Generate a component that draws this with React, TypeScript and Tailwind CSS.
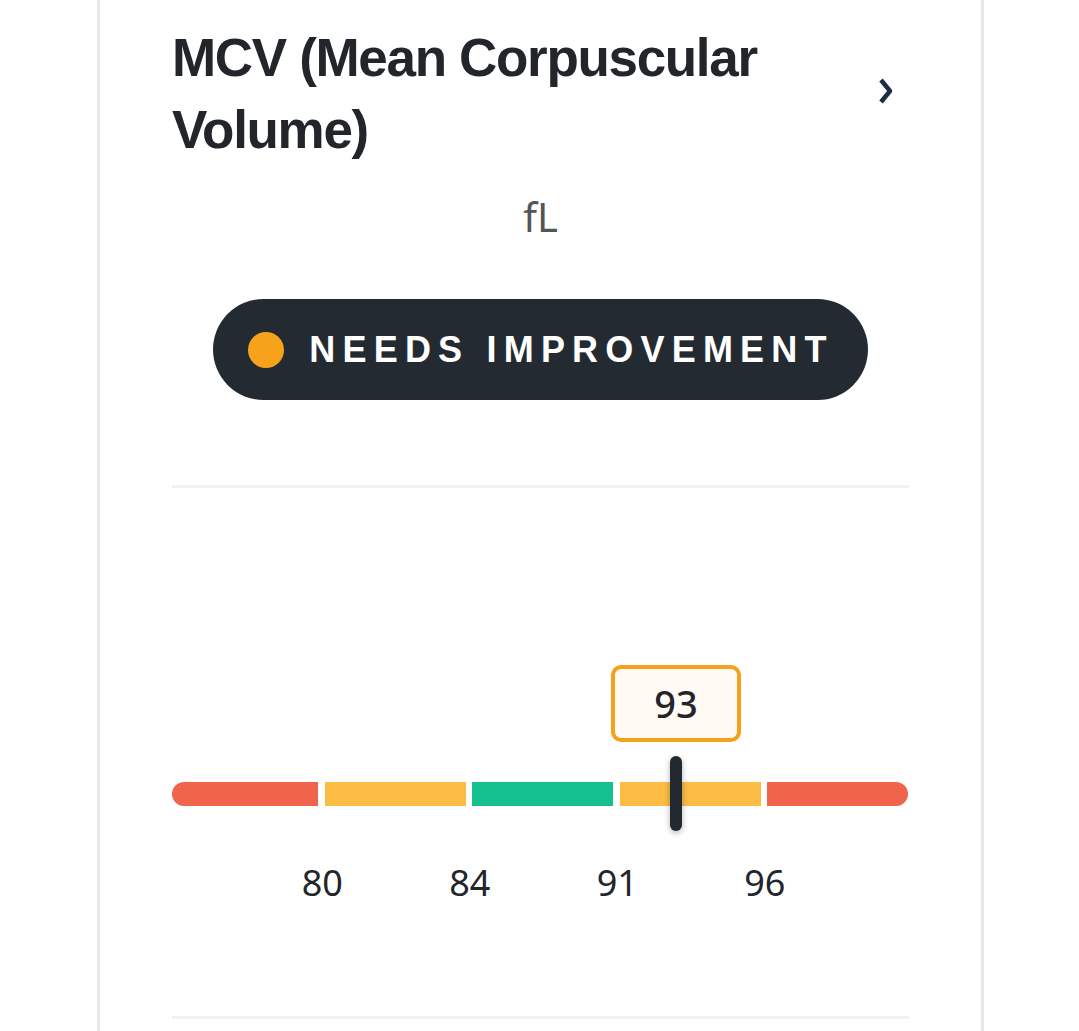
import React from 'react';

const segments = [
  { color: '#f1644c', from: 0, to: 80, width: 146 },
  { color: '#fdbd45', from: 80, to: 84, width: 141 },
  { color: '#13c08e', from: 84, to: 91, width: 141 },
  { color: '#fdbd45', from: 91, to: 96, width: 141 },
  { color: '#f1644c', from: 96, to: 120, width: 141 },
];

const value = 93;
const gap = 6.5;

function markerLeft() {
  let x = 0;
  for (const s of segments) {
    if (value >= s.from && value < s.to) {
      return x + ((value - s.from) / (s.to - s.from)) * s.width;
    }
    x += s.width + gap;
  }
  return x;
}

function boundaries() {
  const out: { x: number; label: number }[] = [];
  let x = 0;
  segments.slice(0, 4).forEach((s) => {
    x += s.width;
    out.push({ x: x + gap / 2, label: s.to });
    x += gap;
  });
  return out;
}

export default function App() {
  const left = markerLeft();

  return (
    <div className="min-h-screen bg-white" style={{ fontFamily: '"Liberation Sans", Arial, sans-serif' }}>
      <div className="ml-[97px] w-[887px] border-x-[3px] border-[#e7e7e7] px-[72px] pt-[22px] pb-[12px]">
        {/* header */}
        <div className="flex items-center justify-between">
          <h2 className="max-w-[640px] text-[53px] leading-[72px] font-bold tracking-[-0.025em] text-[#22262b]">
            MCV (Mean Corpuscular Volume)
          </h2>
          <svg width="16" height="30" viewBox="0 0 16 30" className="mr-[15px] mb-[4px]">
            <polyline points="3,3 12,14 3,25" fill="none" stroke="#1f2a44" strokeWidth="4.5" strokeLinejoin="round" />
          </svg>
        </div>

        <p className="mt-[27px] text-center text-[40px] leading-[48px] text-[#555555]" style={{ fontFamily: '"Noto Sans", sans-serif' }}>
          fL
        </p>

        <div className="mt-[58px] flex justify-center">
          <div className="flex h-[101px] items-center gap-[25px] rounded-full bg-[#242a31] pl-[35px] pr-[34px]">
            <span className="h-[36px] w-[36px] rounded-full bg-[#f7a21b]" />
            <span className="text-[36px] font-bold tracking-[0.2em] text-white">NEEDS IMPROVEMENT</span>
          </div>
        </div>

        <div className="mt-[85px] h-[3px] bg-[#f1f1f1]" />

        {/* range scale */}
        <div className="relative mt-[177px]" style={{ fontFamily: '"Noto Sans", sans-serif' }}>
          <div
            className="absolute top-0 flex h-[77px] w-[130px] -translate-x-1/2 items-center justify-center rounded-[10px] border-[4px] border-[#f5a11c] bg-[#fffaf4]"
            style={{ left }}
          >
            <span className="text-[38px] font-medium text-[#22262b]">{value}</span>
          </div>

          <div className="pt-[117px]">
            <div className="flex h-[24px] gap-[6.5px]">
              {segments.map((s, i) => (
                <div
                  key={i}
                  className={
                    'h-full shrink-0 ' + (i === 0 ? 'rounded-l-full' : i === segments.length - 1 ? 'rounded-r-full' : '')
                  }
                  style={{ backgroundColor: s.color, width: s.width }}
                />
              ))}
            </div>
          </div>

          <div
            className="absolute top-[91px] h-[75px] w-[12px] -translate-x-1/2 rounded-full bg-[#232931] shadow-[0_2px_6px_rgba(0,0,0,0.3)]"
            style={{ left }}
          />

          <div className="relative mt-[53px] h-[48px]">
            {boundaries().map((b) => (
              <span
                key={b.label}
                className="absolute top-0 -translate-x-1/2 text-[36px] leading-[48px] text-[#22262b]"
                style={{ left: b.x + 1 }}
              >
                {b.label}
              </span>
            ))}
          </div>
        </div>

        <div className="mt-[109px] h-[3px] bg-[#f1f1f1]" />
      </div>
    </div>
  );
}
